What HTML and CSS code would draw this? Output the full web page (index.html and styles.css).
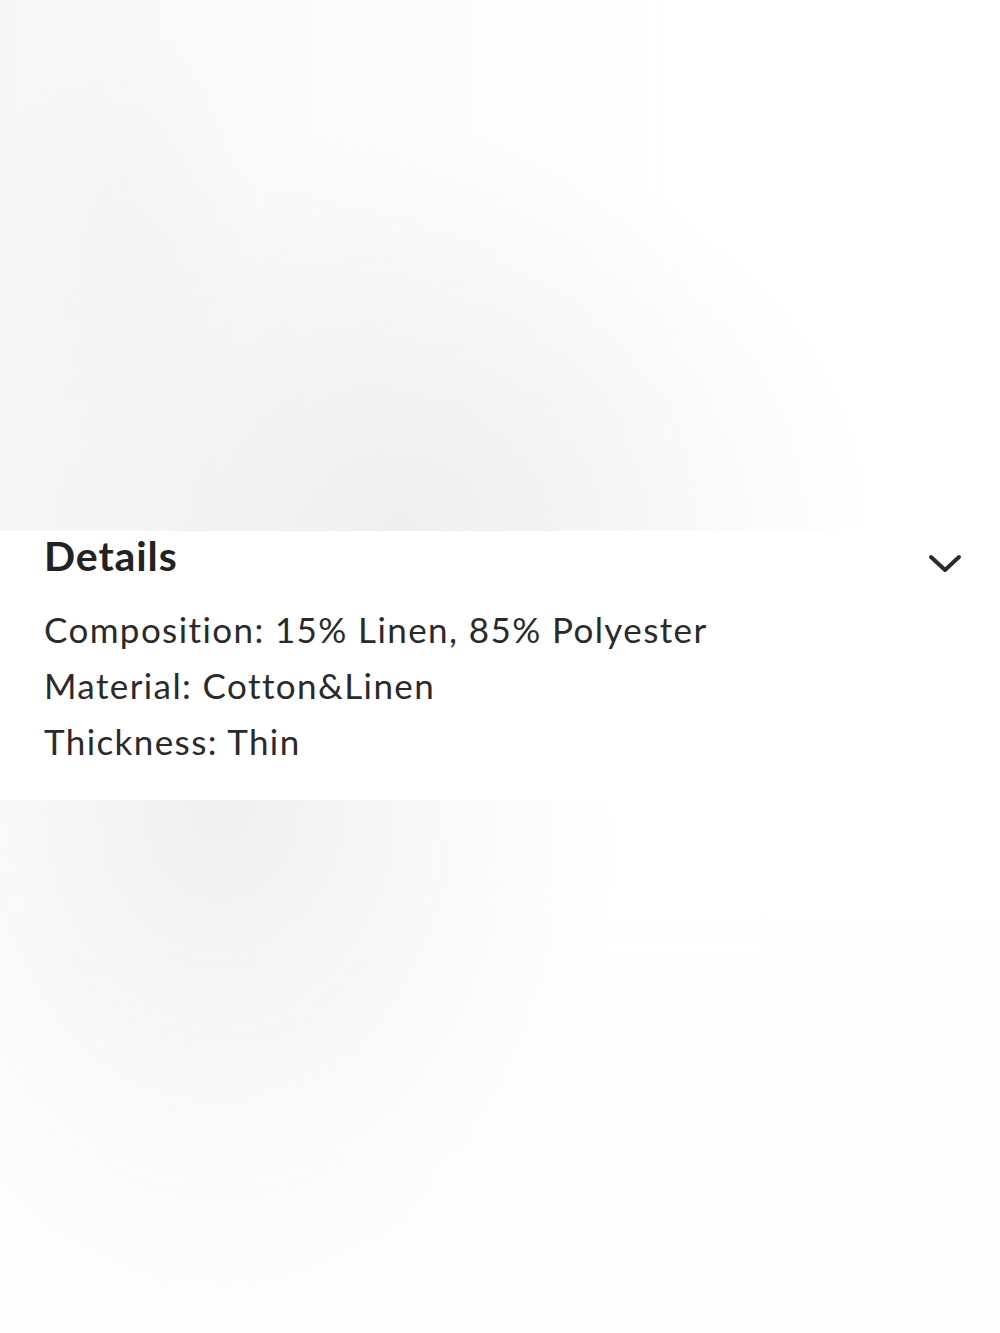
FILE: index.html
```html
<!DOCTYPE html>
<html lang="en">
<head>
<meta charset="utf-8">
<title>Details</title>
<link rel="stylesheet" href="styles.css">
</head>
<body>
<div class="page">
  <div class="photo-top"></div>
  <section class="details">
    <div class="details-head">
      <h2 class="details-title">Details</h2>
      <svg class="chevron" width="34" height="22" viewBox="0 0 34 22" aria-hidden="true">
        <path d="M3 4 L17 17 L31 4" fill="none" stroke="#2b2b2b" stroke-width="4" stroke-linecap="round" stroke-linejoin="round"/>
      </svg>
    </div>
    <ul class="details-list">
      <li>Composition: 15% Linen, 85% Polyester</li>
      <li>Material: Cotton&amp;Linen</li>
      <li>Thickness: Thin</li>
    </ul>
  </section>
  <div class="photo-bottom"></div>
</div>
</body>
</html>
```

FILE: styles.css
```css
* { box-sizing: border-box; }
html, body {
  margin: 0;
  padding: 0;
  background: #ffffff;
}
body {
  font-family: Lato, "Liberation Sans", sans-serif;
  color: #222;
  font-variant-ligatures: none;
}
.page {
  width: 1000px;
  height: 1333px;
  display: flex;
  flex-direction: column;
  overflow: hidden;
}
.photo-top {
  height: 531px;
  flex: none;
  background:
    radial-gradient(ellipse 48% 75% at 40% 100%, #efefef 0%, rgba(239,239,239,0.6) 40%, rgba(255,255,255,0) 100%),
    radial-gradient(ellipse 14% 40% at 12% 45%, rgba(244,244,244,0.9) 0%, rgba(255,255,255,0) 100%),
    linear-gradient(to right, #f7f7f7 0%, #fbfbfb 35%, #ffffff 70%);
}
.details {
  flex: none;
  height: 269px;
  background: #fff;
  padding: 0 38px 0 44px;
}
.details-head {
  display: flex;
  justify-content: space-between;
  align-items: flex-start;
  height: 70px;
}
.details-title {
  margin: 0;
  padding-top: 1px;
  font-size: 41px;
  line-height: 48px;
  font-weight: 700;
  letter-spacing: 0.9px;
  color: #222;
}
.chevron {
  margin-top: 22px;
}
.details-list {
  list-style: none;
  margin: 0;
  padding: 0;
}
.details-list li {
  font-size: 35px;
  line-height: 56px;
  letter-spacing: 1.4px;
  color: #2a2a2a;
}
.photo-bottom {
  flex: 1;
  background:
    radial-gradient(ellipse 40% 95% at 22% 0%, #f0f0f0 0%, rgba(240,240,240,0.6) 35%, rgba(255,255,255,0) 100%),
    linear-gradient(to bottom, #ffffff 0%, #fdfdfd 100%);
}
```
